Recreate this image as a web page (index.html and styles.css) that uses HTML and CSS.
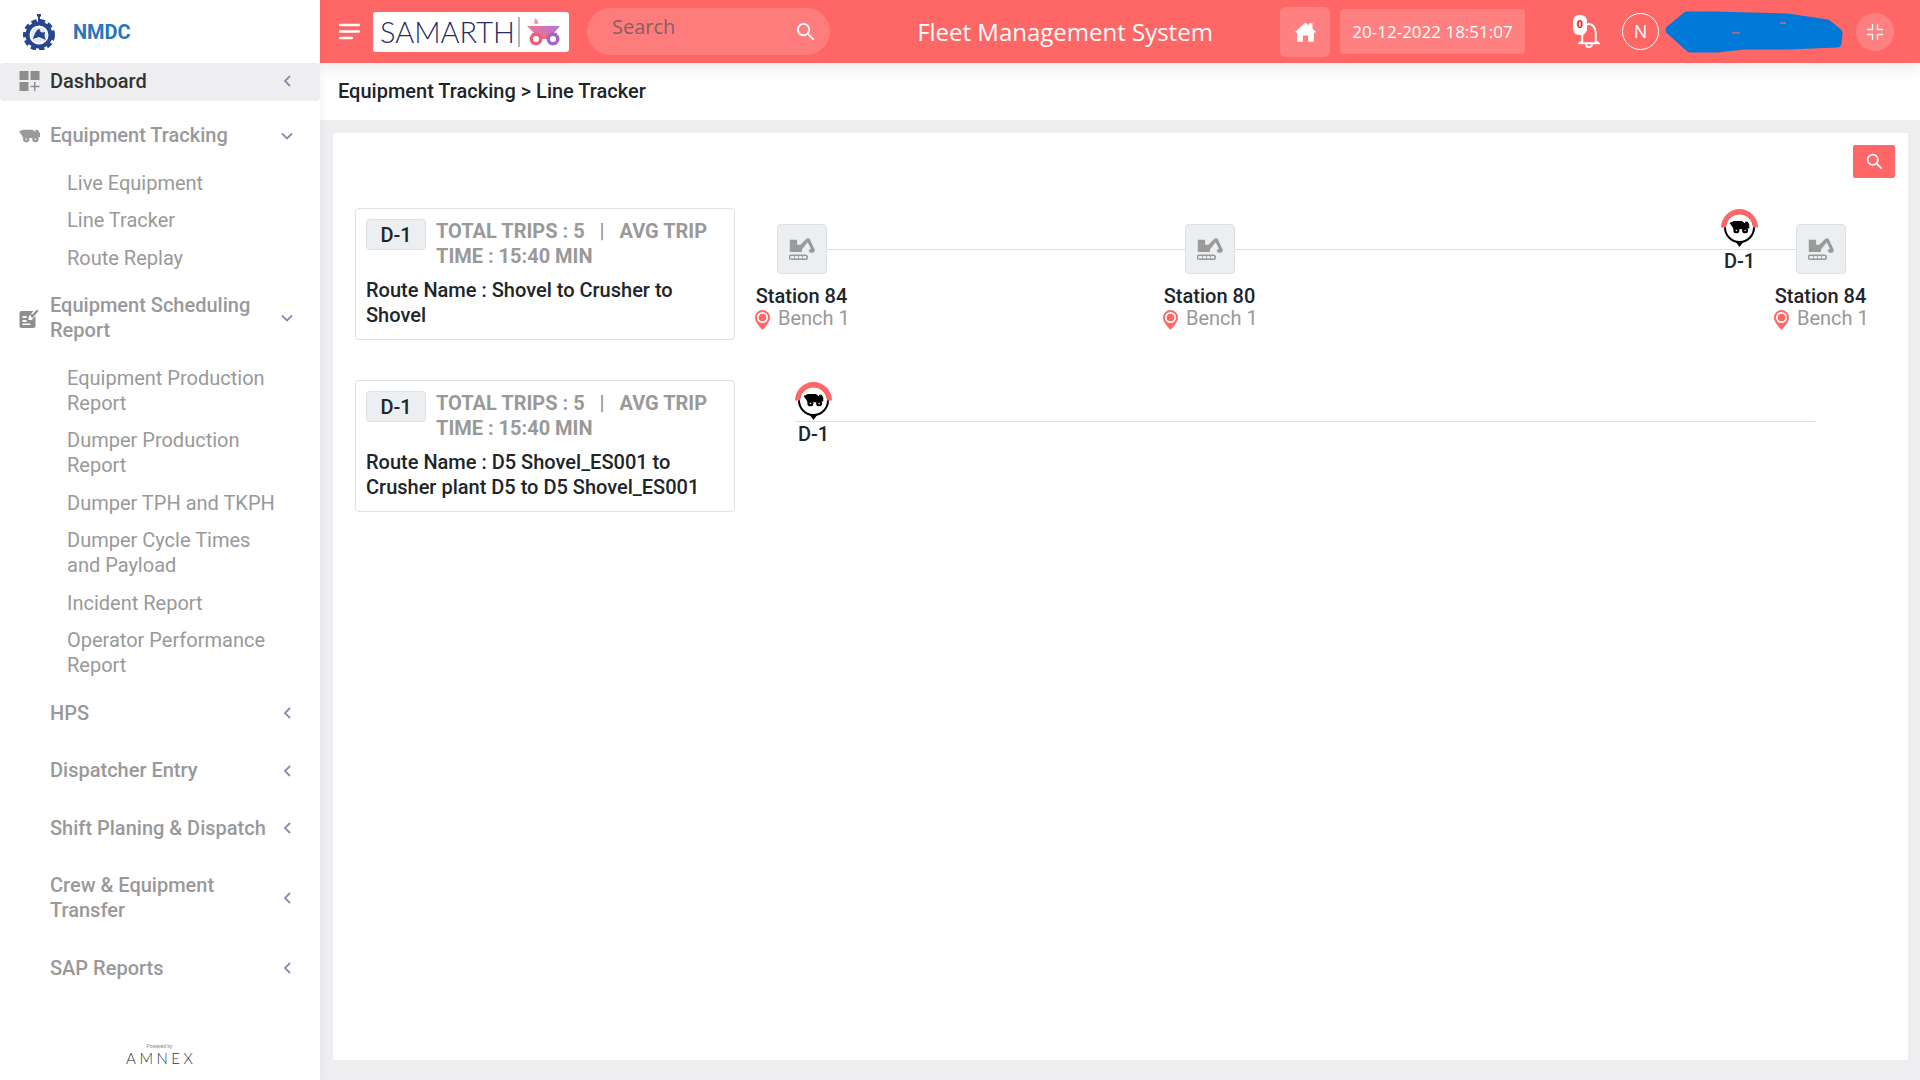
FILE: index.html
```html
<!DOCTYPE html>
<html>
<head>
    <title>Fleet Management System</title>
    <link rel="stylesheet" href="styles.css">
</head>
<body>
    <svg class="sprite" xmlns="http://www.w3.org/2000/svg">
        <symbol id="truck" viewBox="0 0 32 20">
            <path d="M0 3 L7 0 H20 L25 4 V1 H29 L32 6 V12 H27 L26 13 H6 L5 10 Z"/>
            <circle cx="11" cy="15" r="4.800"/>
            <circle cx="25" cy="15" r="4.800"/>
            <circle cx="11" cy="15" r="1.200" fill="#fff"/>
            <circle cx="25" cy="15" r="1.200" fill="#fff"/>
        </symbol>
        <symbol id="digger" viewBox="0 0 32 28">
            <path d="M1 2 H10 V8 H14 L22 0 H25 L32 15 L30 18 H26 L24 15 L27 13 L23 5 L16 14 V17 H1 Z"/>
            <path fill-rule="evenodd" d="M3 20 H20 A3.500 3.500 0 0 1 20 27 H3 A3.500 3.500 0 0 1 3 20 Z M3 22 A1.500 1.500 0 0 0 3 25 H5 A1.500 1.500 0 0 0 5 22 Z M8.500 22 A1.500 1.500 0 0 0 8.500 25 H10 A1.500 1.500 0 0 0 10 22 Z M13.500 22 A1.500 1.500 0 0 0 13.500 25 H15 A1.500 1.500 0 0 0 15 22 Z M18.500 22 A1.500 1.500 0 0 0 18.500 25 H20 A1.500 1.500 0 0 0 20 22 Z"/>
        </symbol>
        <symbol id="pin" viewBox="0 0 15 20">
            <path fill="#ff6666" d="M7.500 0 A7.500 7.500 0 0 1 15 7.500 C15 12 10 17 7.500 20 C5 17 0 12 0 7.500 A7.500 7.500 0 0 1 7.500 0 Z"/>
            <circle cx="7.500" cy="7.500" r="5.500" fill="#fff"/>
            <circle cx="7.500" cy="7.500" r="3.800" fill="#ff6666"/>
        </symbol>
        <symbol id="marker" viewBox="0 0 37 38">
            <path d="M18.500 38 L14 32 H23 Z" fill="#000"/>
            <circle cx="18.500" cy="18.500" r="14.500" fill="#fff" stroke="#000" stroke-width="2"/>
            <path d="M0 18.500 A18.500 18.500 0 0 1 37 18.500 H32 A13.500 13 0 0 0 5 18.500 Z" fill="#ff6666"/>
            <use href="#truck" x="8.500" y="12" width="20" height="12.500" fill="#000"/>
        </symbol>
        <linearGradient id="bed-fade" x1="0" x2="1" y1="0" y2="0">
            <stop offset="0" stop-color="#f0788c"/>
            <stop offset="1" stop-color="#b573dc"/>
        </linearGradient>
    </svg>

    <aside class="sidebar">
        <div class="brand">
            <svg class="brand-logo" viewBox="0 0 34 36">
                <path d="M15 0 H19 V2 L18 3 V8 H16 V3 L15 2 Z" fill="#27468c"/>
                <circle cx="17" cy="21" r="13.500" fill="none" stroke="#27468c" stroke-width="5" stroke-dasharray="5 3"/>
                <circle cx="17" cy="21" r="11.500" fill="none" stroke="#27468c" stroke-width="4"/>
                <circle cx="17" cy="21" r="8" fill="#e4e9f3"/>
                <path d="M11 25 C13 18 15 15 18 15 C17 18 20 19 23 18 C22 22 23 24 24 26 L17 23 Z" fill="#27468c"/>
            </svg>
            <span class="brand-name">NMDC</span>
        </div>

        <ul class="menu">
            <li class="menu-item active">
                <svg class="menu-icon" viewBox="0 0 20 20" fill="#8e8e8e">
                    <rect x="0" y="0" width="9" height="9"/>
                    <rect x="11" y="0" width="9" height="9"/>
                    <rect x="0" y="11" width="9" height="9"/>
                    <path d="M14.500 11 h1.500 v3.700 h4 v1.500 h-4 v3.800 h-1.500 v-3.800 h-3.500 v-1.500 h3.500 Z"/>
                </svg>
                <span class="menu-text">Dashboard</span>
                <svg class="chevron" viewBox="0 0 8 12"><path d="M6.500 1 L1.500 6 L6.500 11"/></svg>
            </li>
            <li class="menu-item">
                <svg class="menu-icon" viewBox="0 0 32 20" fill="#9a9a9a"><use href="#truck"/></svg>
                <span class="menu-text">Equipment Tracking</span>
                <svg class="chevron chevron-down" viewBox="0 0 12 8"><path d="M1 1.500 L6 6.500 L11 1.500"/></svg>
            </li>
            <ul class="submenu">
                <li>Live Equipment</li>
                <li>Line Tracker</li>
                <li>Route Replay</li>
            </ul>
            <li class="menu-item">
                <svg class="menu-icon" viewBox="0 0 20 20" fill="#8e8e8e">
                    <path d="M2 3 H14 L9 9 V12 H12 L16 8 V18 A2 2 0 0 1 14 20 H2 A2 2 0 0 1 0 18 V5 A2 2 0 0 1 2 3 Z M3 8 V10 H7 V8 Z M3 12 V14 H7 V12 Z M3 15.500 V17 H11 V15.500 Z" fill-rule="evenodd"/>
                    <path d="M11 8 L13 10 L19 3 L17.500 1.500 L13 6.500 L12 5.500 Z"/>
                </svg>
                <span class="menu-text">Equipment Scheduling Report</span>
                <svg class="chevron chevron-down" viewBox="0 0 12 8"><path d="M1 1.500 L6 6.500 L11 1.500"/></svg>
            </li>
            <ul class="submenu">
                <li>Equipment Production Report</li>
                <li>Dumper Production Report</li>
                <li>Dumper TPH and TKPH</li>
                <li>Dumper Cycle Times and Payload</li>
                <li>Incident Report</li>
                <li>Operator Performance Report</li>
            </ul>
            <li class="menu-item">
                <span class="menu-icon"></span>
                <span class="menu-text">HPS</span>
                <svg class="chevron" viewBox="0 0 8 12"><path d="M6.500 1 L1.500 6 L6.500 11"/></svg>
            </li>
            <li class="menu-item">
                <span class="menu-icon"></span>
                <span class="menu-text">Dispatcher Entry</span>
                <svg class="chevron" viewBox="0 0 8 12"><path d="M6.500 1 L1.500 6 L6.500 11"/></svg>
            </li>
            <li class="menu-item">
                <span class="menu-icon"></span>
                <span class="menu-text">Shift Planing &amp; Dispatch</span>
                <svg class="chevron" viewBox="0 0 8 12"><path d="M6.500 1 L1.500 6 L6.500 11"/></svg>
            </li>
            <li class="menu-item">
                <span class="menu-icon"></span>
                <span class="menu-text">Crew &amp; Equipment Transfer</span>
                <svg class="chevron" viewBox="0 0 8 12"><path d="M6.500 1 L1.500 6 L6.500 11"/></svg>
            </li>
            <li class="menu-item">
                <span class="menu-icon"></span>
                <span class="menu-text">SAP Reports</span>
                <svg class="chevron" viewBox="0 0 8 12"><path d="M6.500 1 L1.500 6 L6.500 11"/></svg>
            </li>
        </ul>

        <div class="powered">
            <span class="powered-by">Powered by</span>
            <span class="powered-name">AMNEX</span>
        </div>
    </aside>

    <div class="main">
        <header class="topbar">
            <svg class="hamburger" viewBox="0 0 21 17">
                <path d="M1 2 H20 M1 8.500 H20 M1 15 H13"/>
            </svg>
            <div class="samarth">
                <span class="samarth-name">SAMARTH</span>
                <span class="samarth-rule"></span>
                <svg class="samarth-truck" viewBox="0 0 34 28">
                    <path d="M8 6 C6 4 8 3 8 0 C11 2 12 4 11 6 Z" fill="#f59aa8"/>
                    <path d="M0 8 H33 L27 15 H7 Z" fill="url(#bed-fade)"/>
                    <path d="M5 15 H30 V21 H5 Z" fill="#ee6f80"/>
                    <circle cx="9" cy="21" r="6.500" fill="#e8607a"/>
                    <circle cx="9" cy="21" r="3" fill="#fff"/>
                    <circle cx="26" cy="21" r="6.500" fill="#a565c8"/>
                    <circle cx="26" cy="21" r="3" fill="#fff"/>
                </svg>
            </div>
            <div class="search-pill">
                <input class="search-input" type="text" placeholder="Search">
                <svg class="search-icon" viewBox="0 0 20 20"><circle cx="8" cy="8" r="6"/><path d="M12.500 12.500 L18.500 18.500"/></svg>
            </div>
            <div class="page-title">Fleet Management System</div>
            <div class="home-btn">
                <svg viewBox="0 0 24 22" width="21" height="20" fill="#fff">
                    <path d="M12 0 L16 3.500 V1 H20 V7 L24 11 L21.500 12 V22 H15 V15 H9 V22 H2.500 V12 L0 11 Z"/>
                </svg>
            </div>
            <div class="clock">20-12-2022 18:51:07</div>
            <div class="bell">
                <svg viewBox="0 0 22 26" width="22" height="25">
                    <path d="M4 19 V11 C4 3 8 1 11 1 C15 1 18 5 18 11 V19 L21 21 H1 Z M8 22 A3 3 0 0 0 14 22"/>
                </svg>
                <span class="bell-count">0</span>
            </div>
            <div class="avatar">N</div>
            <svg class="scribble" viewBox="0 0 179 40">
                <path d="M4 18 L21 4 L47 4 L121 6 L161 12 L172 21 L171 31 L121 33 L77 33 L51 36 L24 36 Z" fill="#0078d7" stroke="#0078d7" stroke-width="9" stroke-linejoin="round"/>
                <path d="M66 21 H74 M114 11 H120" stroke="#c8697e" stroke-width="1.500"/>
            </svg>
            <div class="fullscreen">
                <svg viewBox="0 0 18 18" width="18" height="18">
                    <path d="M6.500 1 V6.500 H1 M11.500 1 V6.500 H17 M6.500 17 V11.500 H1 M11.500 17 V11.500 H17"/>
                </svg>
            </div>
        </header>

        <div class="breadcrumb">Equipment Tracking &gt; Line Tracker</div>

        <div class="content">
            <div class="panel">
                <div class="toolbar">
                    <button class="filter-btn">
                        <svg viewBox="0 0 20 20" width="17" height="17"><circle cx="8" cy="8" r="6"/><path d="M12.500 12.500 L18.500 18.500"/></svg>
                    </button>
                </div>

                <div class="route-row">
                    <div class="route-card">
                        <div class="route-head">
                            <div class="badge">D-1</div>
                            <div class="route-stats">TOTAL TRIPS : 5 &nbsp; | &nbsp; AVG TRIP TIME : 15:40 MIN</div>
                        </div>
                        <div class="route-name">Route Name : Shovel to Crusher to Shovel</div>
                    </div>
                    <div class="track">
                        <div class="track-line"></div>
                        <div class="station">
                            <div class="station-icon"><svg viewBox="0 0 32 28" width="26" height="23"><use href="#digger"/></svg></div>
                            <div class="station-name">Station 84</div>
                            <div class="station-bench"><svg width="15" height="20"><use href="#pin"/></svg>Bench 1</div>
                        </div>
                        <div class="station station-mid">
                            <div class="station-icon"><svg viewBox="0 0 32 28" width="26" height="23"><use href="#digger"/></svg></div>
                            <div class="station-name">Station 80</div>
                            <div class="station-bench"><svg width="15" height="20"><use href="#pin"/></svg>Bench 1</div>
                        </div>
                        <div class="station station-end">
                            <div class="station-icon"><svg viewBox="0 0 32 28" width="26" height="23"><use href="#digger"/></svg></div>
                            <div class="station-name">Station 84</div>
                            <div class="station-bench"><svg width="15" height="20"><use href="#pin"/></svg>Bench 1</div>
                        </div>
                        <div class="vehicle vehicle-far">
                            <svg width="37" height="38"><use href="#marker"/></svg>
                            <span>D-1</span>
                        </div>
                    </div>
                </div>

                <div class="route-row">
                    <div class="route-card">
                        <div class="route-head">
                            <div class="badge">D-1</div>
                            <div class="route-stats">TOTAL TRIPS : 5 &nbsp; | &nbsp; AVG TRIP TIME : 15:40 MIN</div>
                        </div>
                        <div class="route-name">Route Name : D5 Shovel_ES001 to Crusher plant D5 to D5 Shovel_ES001</div>
                    </div>
                    <div class="track">
                        <div class="track-line track-line-empty"></div>
                        <div class="vehicle vehicle-near">
                            <svg width="37" height="38"><use href="#marker"/></svg>
                            <span>D-1</span>
                        </div>
                    </div>
                </div>
            </div>
        </div>
    </div>
</body>
</html>
```

FILE: styles.css
```css
* {
    box-sizing: border-box;
}
body {
    margin: 0;
    height: 1080px;
    overflow: hidden;
    display: flex;
    font-family: Roboto, Arial, sans-serif;
    font-size: 20px;
    line-height: 25px;
    background: #eeeef0;
    color: #212529;
}
.sprite {
    position: absolute;
    width: 0;
    height: 0;
}

/* sidebar */
.sidebar {
    width: 320px;
    flex-shrink: 0;
    background: white;
    display: flex;
    flex-direction: column;
    box-shadow: 2px 0 8px rgba(0,0,0,0.04);
    z-index: 2;
}
.brand {
    height: 63px;
    display: flex;
    align-items: center;
    padding-left: 22px;
}
.brand-logo {
    width: 34px;
    height: 36px;
}
.brand-name {
    margin: 2px 0 0 17px;
    font-size: 20px;
    font-weight: 700;
    color: #2a75bb;
}
.menu {
    list-style: none;
    margin: 0;
    padding: 0;
    color: #999;
}
.menu-item {
    display: flex;
    align-items: center;
    padding: 16.25px 28px 16.25px 19px;
    font-weight: 500;
}
.menu-item.active {
    height: 38px;
    padding: 0 28px 2px 19px;
    margin-bottom: 6px;
    background: #eeeef0;
    border-radius: 4px;
    color: #333;
}
.menu-icon {
    width: 21px;
    height: 20px;
    flex-shrink: 0;
    margin-right: 10px;
}
.menu-text {
    flex: 1;
    max-width: 219px;
}
.chevron {
    margin-left: auto;
    width: 9px;
    height: 12px;
    flex-shrink: 0;
    fill: none;
    stroke: #8090ae;
    stroke-width: 1.8;
}
.chevron-down {
    width: 12px;
    height: 8px;
    margin-right: -1px;
}
.submenu {
    list-style: none;
    margin: 0;
    padding: 0 35px 0 67px;
    font-weight: 400;
}
.submenu li {
    padding: 6.25px 0;
}
.powered {
    margin-top: auto;
    margin-bottom: 14px;
    display: flex;
    flex-direction: column;
    align-items: center;
    color: #333;
    padding-right: 1px;
}
.powered-by {
    font-size: 5px;
    line-height: 8px;
    color: #888;
}
.powered-name {
    font-family: Lato, sans-serif;
    font-weight: 300;
    font-size: 15px;
    line-height: 16px;
    letter-spacing: 3.5px;
    margin-right: -3.5px;
}

/* top bar */
.main {
    flex: 1;
    min-width: 0;
    display: flex;
    flex-direction: column;
}
.topbar {
    height: 63px;
    flex-shrink: 0;
    display: flex;
    align-items: center;
    padding: 0 26px 0 19px;
    background: #ff6666;
    color: white;
    font-family: "Open Sans", sans-serif;
    box-shadow: 0 6px 16px rgba(0,0,0,0.08);
    z-index: 1;
}
.hamburger {
    width: 21px;
    height: 17px;
    fill: none;
    stroke: white;
    stroke-width: 2.4;
    stroke-linecap: round;
    flex-shrink: 0;
}
.samarth {
    width: 196px;
    height: 40px;
    margin-left: 13px;
    flex-shrink: 0;
    display: flex;
    align-items: center;
    padding-left: 7px;
    background: white;
    border-radius: 3px;
}
.samarth-name {
    width: 130px;
    font-family: Lato, sans-serif;
    font-weight: 300;
    font-size: 29px;
    white-space: nowrap;
    color: #272a66;
}
.samarth-rule {
    width: 2px;
    height: 30px;
    margin: 0 7px 0 8px;
    background: #b5b5b5;
}
.samarth-truck {
    width: 34px;
    height: 28px;
}
.search-pill {
    width: 243px;
    height: 47px;
    margin-left: 18px;
    flex-shrink: 0;
    display: flex;
    align-items: center;
    padding: 0 15px 0 25px;
    background: #ff7c7c;
    border-radius: 24px;
}
.search-input {
    flex: 1;
    min-width: 0;
    margin-top: -10px;
    padding: 0;
    background: none;
    border: none;
    outline: none;
    font-family: "Open Sans", sans-serif;
    font-size: 20px;
}
.search-input::placeholder {
    color: #855f66;
    opacity: 1;
}
.search-icon {
    width: 19px;
    height: 19px;
    fill: none;
    stroke: white;
    stroke-width: 2;
    flex-shrink: 0;
}
.page-title {
    flex: 1;
    text-align: center;
    padding-left: 20px;
    font-size: 24px;
}
.home-btn {
    width: 50px;
    height: 50px;
    flex-shrink: 0;
    display: flex;
    align-items: center;
    justify-content: center;
    background: #ff8080;
    border-radius: 6px;
}
.clock {
    width: 185px;
    height: 45px;
    margin-left: 10px;
    flex-shrink: 0;
    display: flex;
    align-items: center;
    justify-content: center;
    background: #ff8080;
    border-radius: 4px;
    font-size: 17px;
}
.bell {
    position: relative;
    width: 27px;
    height: 33px;
    margin-left: 48px;
    flex-shrink: 0;
    display: flex;
    align-items: flex-end;
    justify-content: flex-end;
}
.bell svg {
    fill: none;
    stroke: white;
    stroke-width: 2;
}
.bell-count {
    position: absolute;
    left: 0;
    top: 0;
    width: 14px;
    height: 20px;
    background: white;
    border-radius: 6px;
    color: #f02a00;
    font-size: 11px;
    line-height: 18px;
    font-weight: 700;
    text-align: center;
}
.avatar {
    width: 37px;
    height: 37px;
    margin-left: 22px;
    flex-shrink: 0;
    border: 1px solid white;
    border-radius: 50%;
    display: flex;
    align-items: center;
    justify-content: center;
    font-size: 18px;
}
.scribble {
    width: 179px;
    height: 40px;
    margin-left: 7px;
    flex-shrink: 0;
    overflow: visible;
}
.fullscreen {
    width: 38px;
    height: 38px;
    margin-left: 11px;
    flex-shrink: 0;
    display: flex;
    align-items: center;
    justify-content: center;
    background: #ff8080;
    border-radius: 50%;
}
.fullscreen svg {
    fill: none;
    stroke: white;
    stroke-width: 1.3;
}

/* page */
.breadcrumb {
    height: 57px;
    flex-shrink: 0;
    padding: 16px 18px 0;
    background: white;
    font-weight: 500;
}
.content {
    flex: 1;
    padding: 13px 12px 20px 13px;
    min-height: 0;
}
.panel {
    height: 100%;
    padding: 12px 13px 0 22px;
    background: white;
}
.toolbar {
    display: flex;
    justify-content: flex-end;
    margin-bottom: 30px;
}
.filter-btn {
    width: 42px;
    height: 33px;
    padding: 0;
    display: flex;
    align-items: center;
    justify-content: center;
    background: #ff6666;
    border: none;
    border-radius: 2px;
}
.filter-btn svg {
    fill: none;
    stroke: white;
    stroke-width: 2;
}
.route-row {
    display: flex;
    margin-bottom: 40px;
}
.route-card {
    width: 380px;
    height: 132px;
    flex-shrink: 0;
    padding: 10px;
    border: 1px solid #e0e0e0;
    border-radius: 4px;
}
.route-head {
    display: flex;
    align-items: flex-start;
}
.badge {
    width: 60px;
    height: 31px;
    flex-shrink: 0;
    margin-right: 10px;
    background: #eceff1;
    border: 1px solid #e0e0e0;
    border-radius: 4px;
    text-align: center;
    line-height: 31px;
    font-weight: 500;
}
.route-stats {
    flex: 1;
    font-weight: 700;
    color: #999;
}
.route-name {
    margin-top: 9px;
    font-weight: 500;
}

/* line tracker */
.track {
    position: relative;
    flex: 1;
    margin: 0 28px 0 20px;
    display: flex;
    align-items: flex-start;
    padding-top: 16px;
}
.track-line {
    position: absolute;
    left: 46px;
    right: 46px;
    top: 41px;
    height: 1px;
    background: #ddd;
}
.track-line-empty {
    left: 40px;
    right: 52px;
}
.station {
    position: relative;
    width: 93px;
    display: flex;
    flex-direction: column;
    align-items: center;
}
.station-mid {
    margin-left: 315px;
}
.station-end {
    margin-left: auto;
}
.station-icon {
    width: 50px;
    height: 50px;
    display: flex;
    align-items: center;
    justify-content: center;
    background: #eceff1;
    border: 1px solid #e0e0e0;
    border-radius: 4px;
    fill: #9a9a9a;
}
.station-name {
    margin-top: 11px;
    font-weight: 500;
    line-height: 22px;
    white-space: nowrap;
}
.station-bench {
    width: 100%;
    margin-top: -1px;
    display: flex;
    align-items: center;
    gap: 8px;
    line-height: 22px;
    color: #999;
    white-space: nowrap;
}
.station-bench svg {
    flex-shrink: 0;
    margin-top: 4px;
}
.vehicle {
    position: absolute;
    width: 37px;
    display: flex;
    flex-direction: column;
    align-items: center;
    font-weight: 500;
    line-height: 20px;
}
.vehicle svg {
    flex-shrink: 0;
}
.vehicle span {
    margin-top: 4px;
}
.vehicle-far {
    left: 966px;
    top: 1px;
}
.vehicle-near {
    left: 40px;
    top: 2px;
}
```
